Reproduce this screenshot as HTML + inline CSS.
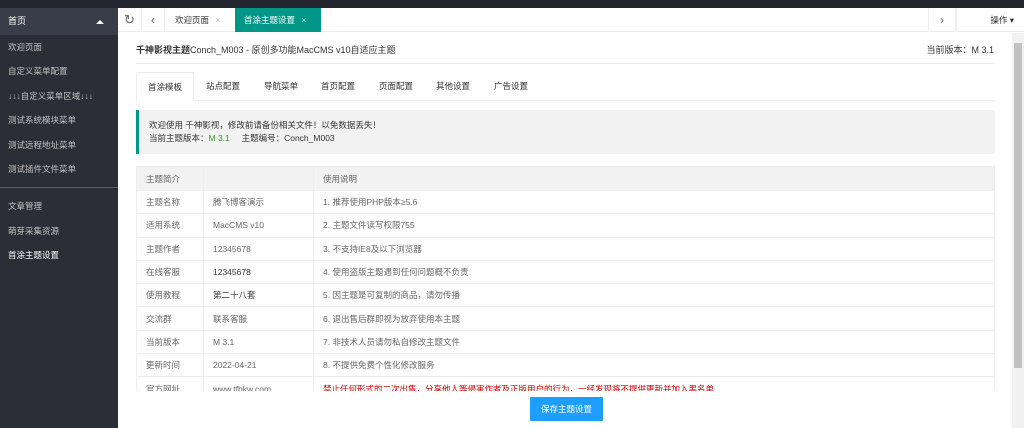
<!DOCTYPE html>
<html><head><meta charset="utf-8"><style>
*{margin:0;padding:0;box-sizing:border-box}
body{width:1024px;height:428px;overflow:hidden;background:#fff;font-family:"Liberation Sans","Noto Sans CJK SC",sans-serif;font-size:9px;color:#333;position:relative}
.top{position:absolute;left:0;top:0;width:1024px;height:8px;background:#23262e}
.side{position:absolute;left:0;top:8px;width:118px;height:420px;background:#2b2e37}
.side .hd{height:27px;background:#393d49;color:#fff;padding:0 8px;line-height:27px;position:relative}
.side .hd:after{content:"";position:absolute;right:14px;top:12px;border:4px solid transparent;border-bottom-color:#fff;border-top:0}
.side .it{height:24.4px;line-height:24.4px;padding-left:8px;color:#c2c2c2;font-size:8.5px}
.side .sep{height:1px;background:#5a5e66;margin:6px 0 6px}
.tabs{position:absolute;left:118px;top:8px;width:906px;height:24px;background:#fff;border-bottom:1px solid #eee}
.tabs div{position:absolute;top:0;height:24px;line-height:24px;font-size:8.5px}
.ctl{border-right:1px solid #eee;text-align:center;color:#666}
.main{position:absolute;left:118px;top:33px;width:894px;height:395px;background:#fff}
.title{position:absolute;left:18px;top:10px;font-size:9px;color:#333}
.ver{position:absolute;right:18px;top:10px}
.hr{position:absolute;left:18px;right:18px;top:30px;height:1px;background:#eee}
.nav{position:absolute;left:18px;right:18px;top:39px;height:29px;border-bottom:1px solid #eee}
.nav span{position:absolute;top:0;height:29px;line-height:29px;font-size:8.5px;white-space:nowrap}
.nav .on{border:1px solid #eee;border-bottom-color:#fff;background:#fff;padding:0 11px;width:58px;height:30px}
.alert{position:absolute;left:18px;right:17px;top:77px;height:44px;background:#f2f2f2;border-left:3px solid #009688;padding:9px 0 0 10px;line-height:13px;font-size:8.5px}
table{position:absolute;left:18px;top:133px;width:859px;border-collapse:collapse;font-size:8.5px;color:#666}
td{border:1px solid #eee;height:23.3px;padding-left:9px}
tr.h td{background:#f2f2f2;height:24px}
.foot{position:absolute;left:0;top:358px;width:894px;height:37px;background:#fff}
.btn{position:absolute;left:412px;top:6px;width:73px;height:24px;background:#1e9fff;color:#fff;text-align:center;line-height:24px;font-size:8.5px;border-radius:1px}
.sb{position:absolute;left:1012px;top:33px;width:12px;height:395px;background:#f1f1f1}
.sb div{position:absolute;left:2px;top:10px;width:8px;height:325px;background:#c1c1c1}
</style></head><body>
<div class="top"></div>
<div class="side">
<div class="hd">首页</div>
<div class="it" style="margin-top:0">欢迎页面</div>
<div class="it">自定义菜单配置</div>
<div class="it">↓↓↓自定义菜单区域↓↓↓</div>
<div class="it">测试系统模块菜单</div>
<div class="it">测试远程地址菜单</div>
<div class="it">测试插件文件菜单</div>
<div class="sep"></div>
<div class="it">文章管理</div>
<div class="it">萌芽采集资源</div>
<div class="it" style="color:#fff">首涂主题设置</div>
</div>
<div class="tabs">
<div class="ctl" style="left:0;width:24px;font-size:13px">↻</div>
<div class="ctl" style="left:24px;width:23px;font-size:12px">‹</div>
<div style="left:47px;width:70px;padding-left:10px;color:#333">欢迎页面 <span style="color:#bbb;margin-left:4px">×</span></div>
<div style="left:117px;width:86px;background:#009688;color:#fff;padding-left:9px">首涂主题设置 <span style="margin-left:4px;opacity:.7">×</span></div>
<div class="ctl" style="left:810px;width:28px;border-left:1px solid #eee;font-size:12px">›</div>
<div style="left:838px;width:68px;border-left:1px solid #eee;text-align:right;padding-right:10px">操作 ▾</div>
</div>
<div class="main">
<div class="title"><b>千神影视主题</b>Conch_M003 - 原创多功能MacCMS v10自适应主题</div>
<div class="ver">当前版本：M 3.1</div>
<div class="hr"></div>
<div class="nav">
<span class="on" style="left:0">首涂模板</span>
<span style="left:70px">站点配置</span>
<span style="left:128px">导航菜单</span>
<span style="left:185px">首页配置</span>
<span style="left:243px">页面配置</span>
<span style="left:300px">其他设置</span>
<span style="left:358px">广告设置</span>
</div>
<div class="alert">欢迎使用 千神影视，修改前请备份相关文件！以免数据丢失！<br>当前主题版本：<span style="color:#2f9b2f">M 3.1</span>&nbsp;&nbsp;&nbsp;&nbsp;&nbsp;主题编号：Conch_M003</div>
<table>
<tr class="h"><td style="width:67px">主题简介</td><td style="width:110px"></td><td>使用说明</td></tr>
<tr><td>主题名称</td><td>腾飞博客演示</td><td>1. 推荐使用PHP版本≥5.6</td></tr>
<tr><td>适用系统</td><td>MacCMS v10</td><td>2. 主题文件读写权限755</td></tr>
<tr><td>主题作者</td><td>12345678</td><td>3. 不支持IE8及以下浏览器</td></tr>
<tr><td>在线客服</td><td style="color:#333">12345678</td><td>4. 使用盗版主题遇到任何问题概不负责</td></tr>
<tr><td>使用教程</td><td style="color:#333">第二十八套</td><td>5. 因主题是可复制的商品，请勿传播</td></tr>
<tr><td>交流群</td><td>联系客服</td><td>6. 退出售后群即视为放弃使用本主题</td></tr>
<tr><td>当前版本</td><td>M 3.1</td><td>7. 非技术人员请勿私自修改主题文件</td></tr>
<tr><td>更新时间</td><td>2022-04-21</td><td>8. 不提供免费个性化修改服务</td></tr>
<tr><td>官方网址</td><td>www.tfbkw.com</td><td style="color:#c00">禁止任何形式的二次出售，分享他人等侵害作者及正版用户的行为，一经发现将不提供更新并加入黑名单</td></tr>
</table>
<div class="foot"><div class="btn">保存主题设置</div></div>
</div>
<div class="sb"><div></div></div>
</body></html>
